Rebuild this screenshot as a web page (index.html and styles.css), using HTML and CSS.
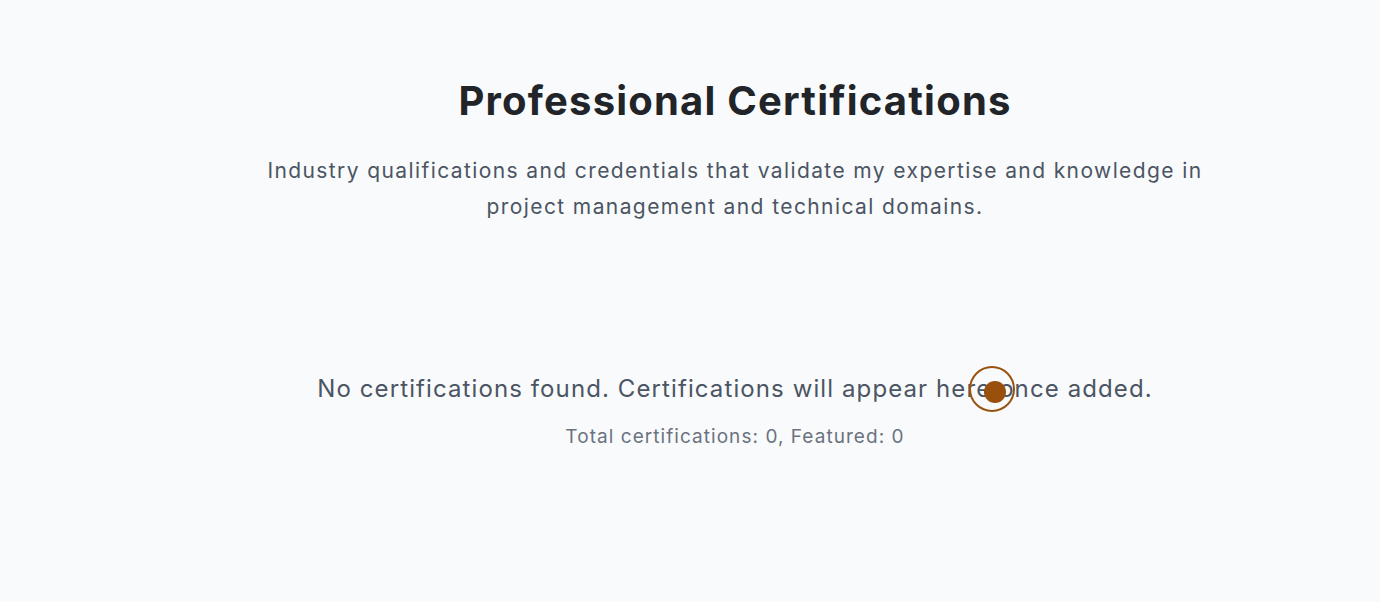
FILE: index.html
```html
<!DOCTYPE html>
<html>
<head>
<meta charset="utf-8">
<link rel="stylesheet" href="styles.css">
</head>
<body>
<section class="certs">
  <header class="head">
    <h1 class="title">Professional Certifications</h1>
    <p class="lead">Industry qualifications and credentials that validate my expertise and knowledge in project management and technical domains.</p>
  </header>
  <div class="empty">
    <p class="empty-msg">No certifications found. Certifications will appear here once added.</p>
    <p class="empty-stats">Total certifications: 0, Featured: 0</p>
  </div>
</section>
<div class="cursor"><span class="cursor-dot"></span></div>
</body>
</html>
```
FILE: styles.css
```css
html, body {
  margin: 0;
  padding: 0;
  background: #f9fafb;
  font-family: Inter, "Noto Sans", sans-serif;
}
.certs {
  display: flex;
  flex-direction: column;
  align-items: center;
  padding: 75px 0 0 90px;
}
.head {
  display: flex;
  flex-direction: column;
  align-items: center;
  text-align: center;
}
.title {
  margin: 0;
  font-size: 40px;
  line-height: 52px;
  font-weight: 700;
  color: #212529;
  letter-spacing: 1.2px;
}
.lead {
  margin: 26px 0 0;
  width: 980px;
  font-size: 21px;
  line-height: 36px;
  color: #4b5563;
  letter-spacing: 1.4px;
}
.empty {
  margin-top: 148px;
  display: flex;
  flex-direction: column;
  align-items: center;
}
.empty-msg {
  margin: 0;
  font-size: 24px;
  line-height: 32px;
  color: #4b5563;
  letter-spacing: 1.1px;
}
.empty-stats {
  margin: 18px 0 0;
  font-size: 19px;
  line-height: 28px;
  color: #6b7280;
  letter-spacing: 1.05px;
}
.cursor {
  position: absolute;
  left: 969px;
  top: 366px;
  width: 46px;
  height: 46px;
  border: 2px solid #9a520f;
  border-radius: 50%;
  box-sizing: border-box;
}
.cursor-dot {
  position: absolute;
  left: 13px;
  top: 13px;
  width: 22px;
  height: 22px;
  border-radius: 50%;
  background: #99500d;
}
```
